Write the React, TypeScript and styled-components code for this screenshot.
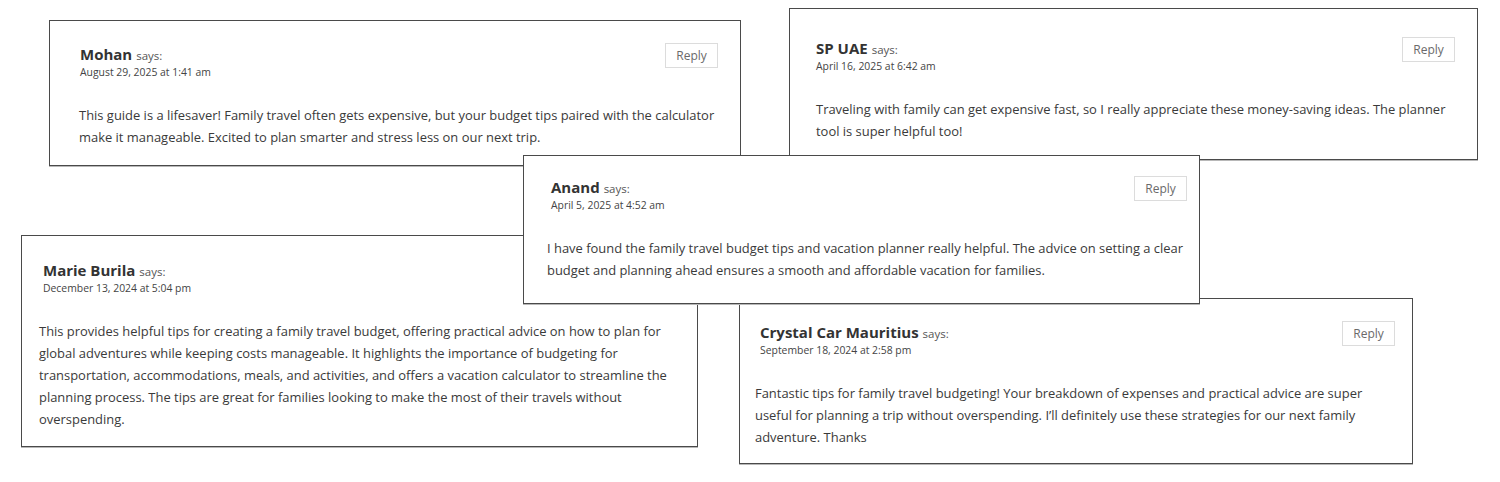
import React from 'react';
import styled, { createGlobalStyle } from 'styled-components';

const GlobalStyle = createGlobalStyle`
  html, body {
    margin: 0;
    padding: 0;
    background: #ffffff;
  }
  body {
    font-family: 'Open Sans', 'Noto Sans', sans-serif;
    color: #333;
  }
`;

const Canvas = styled.div`
  position: relative;
  width: 1500px;
  height: 482px;
  overflow: hidden;
  background: #fff;
`;

interface CardBoxProps {
  $x: number;
  $y: number;
  $w: number;
  $h: number;
  $top: number;
  $left: number;
  $right: number;
  $z: number;
}

// cards overlap like a collage, so each one sits at its own spot on the canvas
const Card = styled.article<CardBoxProps>`
  position: absolute;
  left: ${({ $x }) => $x}px;
  top: ${({ $y }) => $y}px;
  width: ${({ $w }) => $w}px;
  height: ${({ $h }) => $h}px;
  z-index: ${({ $z }) => $z};
  box-sizing: border-box;
  padding: ${({ $top }) => $top}px ${({ $right }) => $right}px 0
    ${({ $left }) => $left}px;
  background: #fff;
  border: 1px solid #4a4a4a;
  box-shadow: 0 1px 0 #b8b8b8;
`;

const Header = styled.header<{ $indent: number }>`
  display: flex;
  justify-content: space-between;
  align-items: flex-start;
  min-height: 36px;
  padding-left: ${({ $indent }) => $indent}px;
`;

const Meta = styled.div`
  display: flex;
  flex-direction: column;
`;

const NameLine = styled.div`
  height: 20px;
  line-height: 20px;
  white-space: nowrap;
`;

const Name = styled.span`
  font-size: 15px;
  font-weight: 700;
  color: #333;
`;

const Says = styled.span`
  font-size: 11.5px;
  color: #555;
  margin-left: 4px;
`;

const DateText = styled.div`
  height: 16px;
  line-height: 16px;
  font-size: 10.4px;
  color: #444;
`;

const ReplyButton = styled.button`
  width: 53px;
  height: 25px;
  box-sizing: border-box;
  padding: 0;
  margin-top: -1px;
  border: 1px solid #dcdcdc;
  background: #fff;
  font-family: inherit;
  font-size: 12px;
  color: #6a6a6a;
  cursor: pointer;
`;

const Body = styled.p`
  margin: 24px 0 0;
  font-size: 12.95px;
  line-height: 22px;
  color: #3a3a3a;
  white-space: nowrap;
`;

interface Comment {
  name: string;
  date: string;
  lines: string[];
  box: CardBoxProps;
  indent: number;
  reply: boolean;
}

const comments: Comment[] = [
  {
    name: 'Mohan',
    date: 'August 29, 2025 at 1:41 am',
    lines: [
      'This guide is a lifesaver! Family travel often gets expensive, but your budget tips paired with the calculator',
      'make it manageable. Excited to plan smarter and stress less on our next trip.',
    ],
    box: { $x: 49, $y: 20, $w: 692, $h: 146, $top: 23, $left: 29, $right: 22, $z: 1 },
    indent: 1,
    reply: true,
  },
  {
    name: 'SP UAE',
    date: 'April 16, 2025 at 6:42 am',
    lines: [
      'Traveling with family can get expensive fast, so I really appreciate these money-saving ideas. The planner',
      'tool is super helpful too!',
    ],
    box: { $x: 789, $y: 8, $w: 689, $h: 152, $top: 29, $left: 26, $right: 22, $z: 1 },
    indent: 0,
    reply: true,
  },
  {
    name: 'Marie Burila',
    date: 'December 13, 2024 at 5:04 pm',
    lines: [
      'This provides helpful tips for creating a family travel budget, offering practical advice on how to plan for',
      'global adventures while keeping costs manageable. It highlights the importance of budgeting for',
      'transportation, accommodations, meals, and activities, and offers a vacation calculator to streamline the',
      'planning process. The tips are great for families looking to make the most of their travels without',
      'overspending.',
    ],
    box: { $x: 21, $y: 235, $w: 677, $h: 212, $top: 24, $left: 17, $right: 22, $z: 1 },
    indent: 4,
    // its button lies under the Anand card in the screenshot
    reply: false,
  },
  {
    name: 'Crystal Car Mauritius',
    date: 'September 18, 2024 at 2:58 pm',
    lines: [
      'Fantastic tips for family travel budgeting! Your breakdown of expenses and practical advice are super',
      'useful for planning a trip without overspending. I\u2019ll definitely use these strategies for our next family',
      'adventure. Thanks',
    ],
    box: { $x: 739, $y: 298, $w: 674, $h: 166, $top: 23, $left: 15, $right: 17, $z: 1 },
    indent: 5,
    reply: true,
  },
  {
    name: 'Anand',
    date: 'April 5, 2025 at 4:52 am',
    lines: [
      'I have found the family travel budget tips and vacation planner really helpful. The advice on setting a clear',
      'budget and planning ahead ensures a smooth and affordable vacation for families.',
    ],
    box: { $x: 523, $y: 155, $w: 677, $h: 149, $top: 21, $left: 23, $right: 12, $z: 2 },
    indent: 4,
    reply: true,
  },
];

const CommentCard = ({ comment }: { comment: Comment }) => (
  <Card {...comment.box}>
    <Header $indent={comment.indent}>
      <Meta>
        <NameLine>
          <Name>{comment.name}</Name>
          <Says>says:</Says>
        </NameLine>
        <DateText>{comment.date}</DateText>
      </Meta>
      {comment.reply && <ReplyButton>Reply</ReplyButton>}
    </Header>
    <Body>
      {comment.lines.map((line, i) => (
        <React.Fragment key={i}>
          {i > 0 && <br />}
          {line}
        </React.Fragment>
      ))}
    </Body>
  </Card>
);

export default function App() {
  return (
    <>
      <GlobalStyle />
      <Canvas>
        {comments.map((c) => (
          <CommentCard key={c.name} comment={c} />
        ))}
      </Canvas>
    </>
  );
}
